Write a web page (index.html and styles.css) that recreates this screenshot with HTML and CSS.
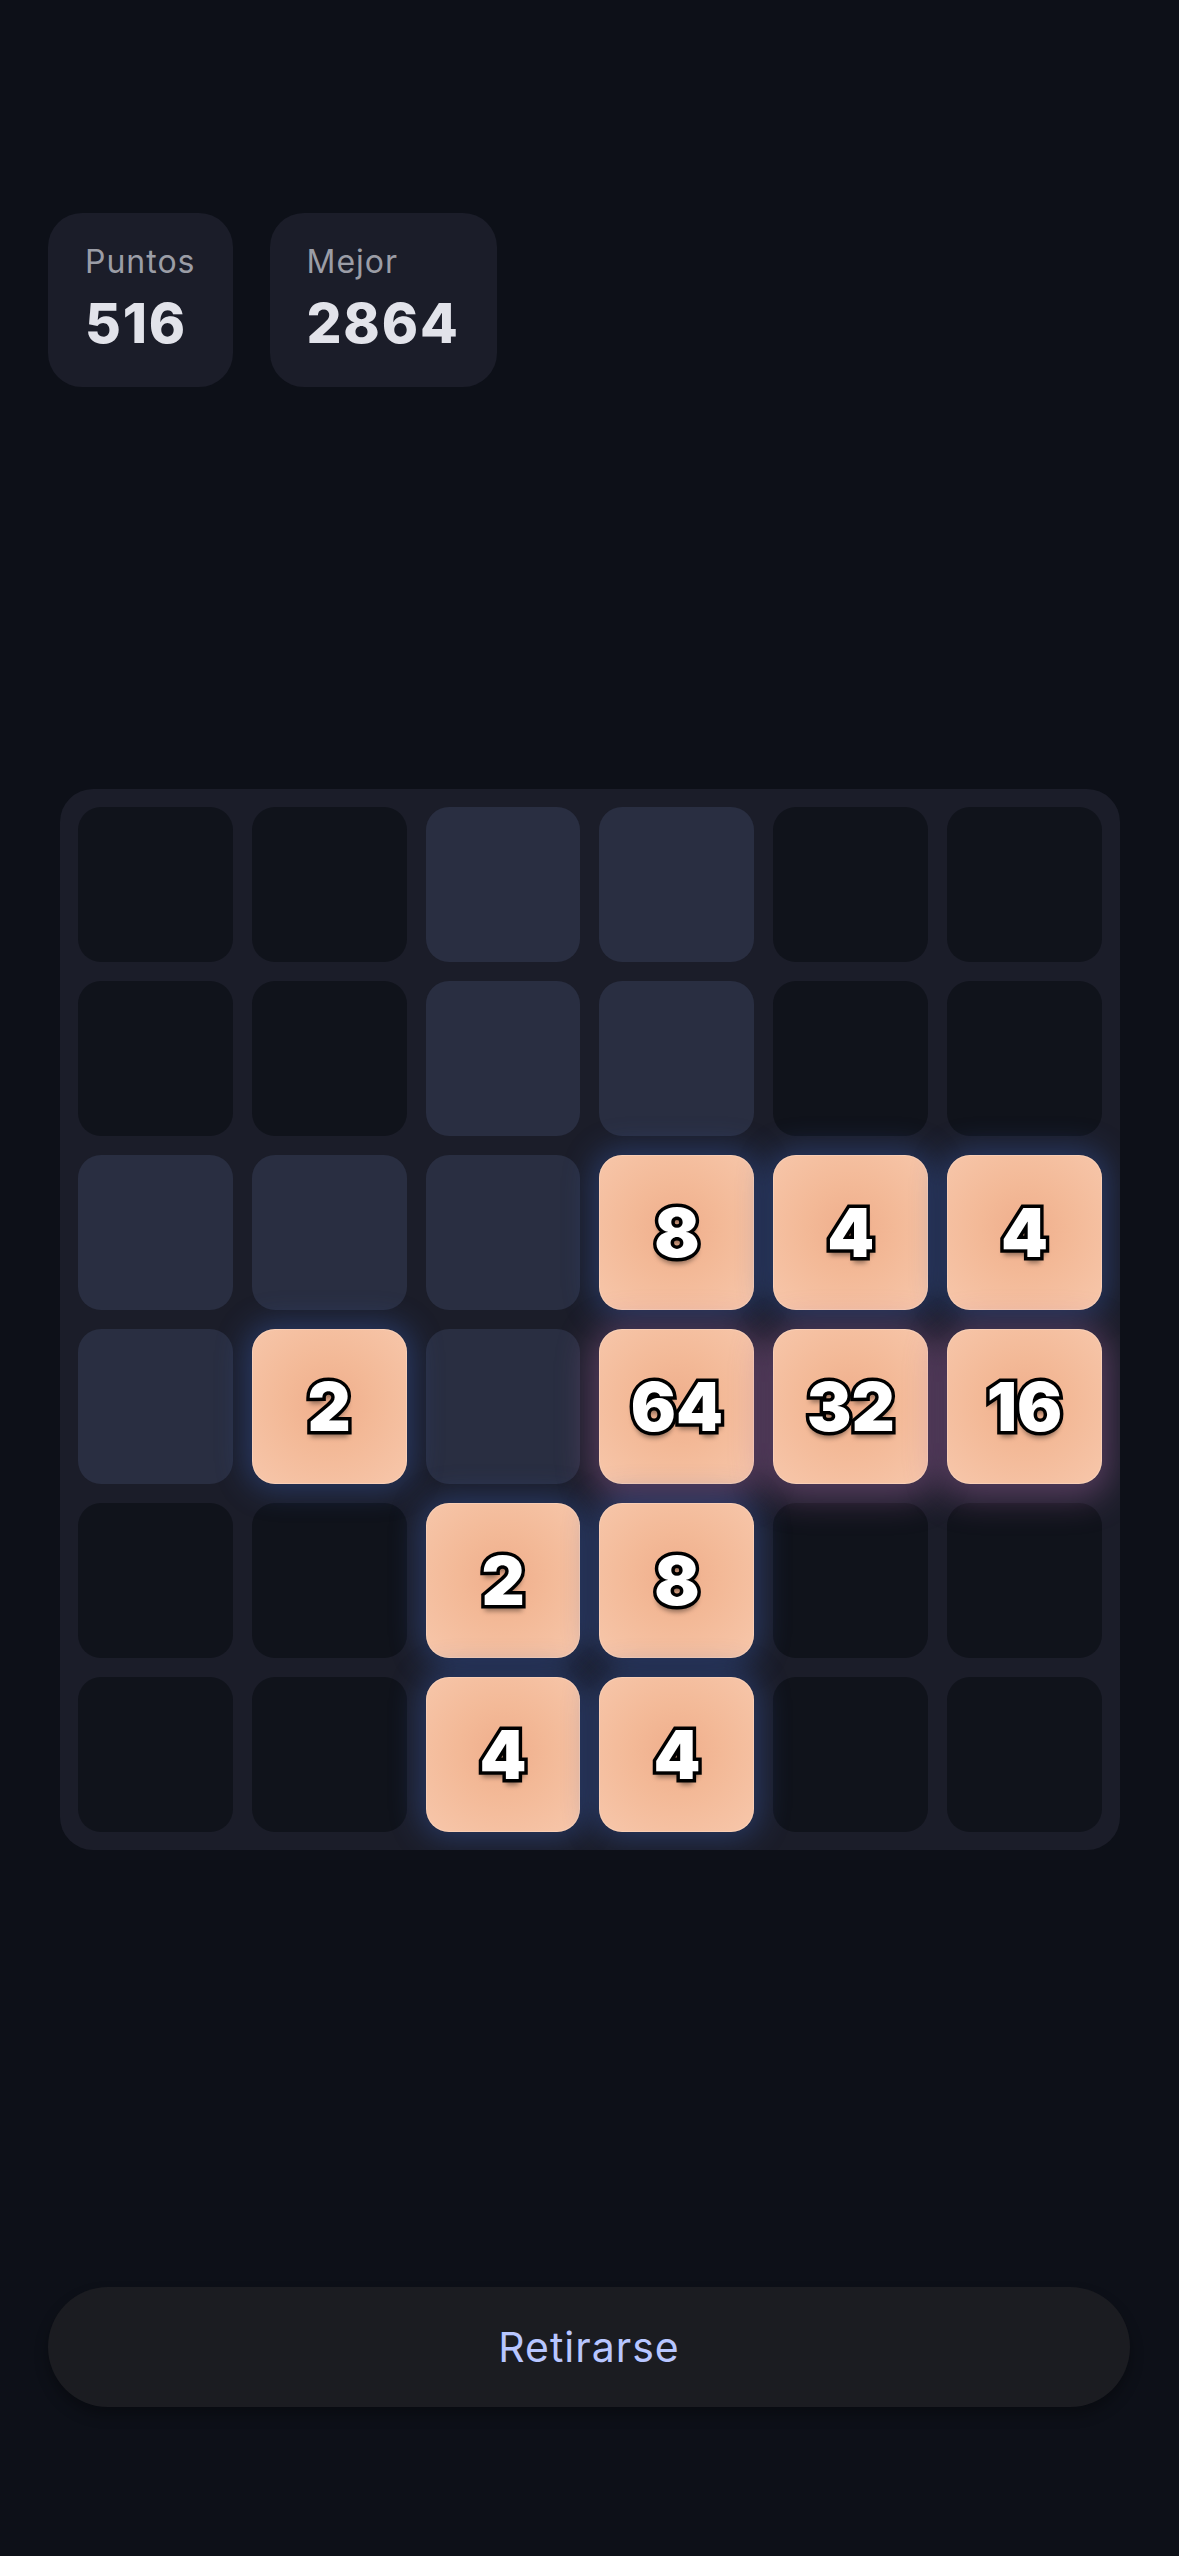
FILE: index.html
```html
<!DOCTYPE html>
<html>
<head>
  <title>2048</title>
  <link rel="stylesheet" href="styles.css">
</head>
<body>
  <div class="page">
    <div class="scores">
      <div class="score">
        <div class="score-label">Puntos</div>
        <div class="score-value">516</div>
      </div>
      <div class="score">
        <div class="score-label">Mejor</div>
        <div class="score-value">2864</div>
      </div>
    </div>

    <div class="board">
      <div class="cell"></div>
      <div class="cell"></div>
      <div class="cell lit"></div>
      <div class="cell lit"></div>
      <div class="cell"></div>
      <div class="cell"></div>

      <div class="cell"></div>
      <div class="cell"></div>
      <div class="cell lit"></div>
      <div class="cell lit"></div>
      <div class="cell"></div>
      <div class="cell"></div>

      <div class="cell lit"></div>
      <div class="cell lit"></div>
      <div class="cell lit"></div>
      <div class="cell tile"><span>8</span></div>
      <div class="cell tile"><span>4</span></div>
      <div class="cell tile"><span>4</span></div>

      <div class="cell lit"></div>
      <div class="cell tile"><span>2</span></div>
      <div class="cell lit"></div>
      <div class="cell tile hot"><span>64</span></div>
      <div class="cell tile hot"><span>32</span></div>
      <div class="cell tile hot"><span>16</span></div>

      <div class="cell"></div>
      <div class="cell"></div>
      <div class="cell tile"><span>2</span></div>
      <div class="cell tile"><span>8</span></div>
      <div class="cell"></div>
      <div class="cell"></div>

      <div class="cell"></div>
      <div class="cell"></div>
      <div class="cell tile"><span>4</span></div>
      <div class="cell tile"><span>4</span></div>
      <div class="cell"></div>
      <div class="cell"></div>
    </div>

    <button class="quit-button">Retirarse</button>
  </div>
</body>
</html>
```

FILE: styles.css
```css
body {
  margin: 0;
  background-color: #0d1018;
  font-family: Inter, "Noto Sans", sans-serif;
}

.page {
  min-height: 2556px;
  padding: 213px 48px 0 48px;
  box-sizing: border-box;
  display: flex;
  flex-direction: column;
}

.scores {
  display: flex;
  gap: 37px;
}

.score {
  background-color: #1b1d29;
  border-radius: 34px;
  padding: 30px 37px 31px 37px;
  display: flex;
  flex-direction: column;
  gap: 9px;
}

.score-label {
  font-size: 32px;
  line-height: 38px;
  color: #9b9da6;
  letter-spacing: 1px;
}

.score-value {
  font-size: 55px;
  line-height: 66px;
  font-weight: 800;
  color: #e2e3ea;
  letter-spacing: 1.8px;
}

/* Board */
.board {
  width: 1060px;
  box-sizing: border-box;
  margin: 402px 0 0 12px;
  padding: 18px;
  background-color: #1b1d29;
  border-radius: 33px;
  overflow: hidden;
  display: grid;
  grid-template-columns: repeat(6, 1fr);
  gap: 19px;
}

.cell {
  height: 155px;
  border-radius: 23px;
  background-color: #10131b;
  display: flex;
  align-items: center;
  justify-content: center;
}

.cell.lit {
  background-color: #292e41;
}

.tile {
  background: radial-gradient(circle at 50% 48%, #efae8c 0%, #f3b997 40%, #f7c7ab 100%);
  box-shadow: 0 0 30px 6px rgba(58, 92, 170, 0.45), inset 0 0 0 1px rgba(255, 230, 215, 0.35);
  position: relative;
  z-index: 1;
}

.tile.hot {
  box-shadow: 0 6px 34px 8px rgba(160, 100, 160, 0.45), inset 0 0 0 1px rgba(255, 230, 215, 0.35);
}

.tile span {
  font-size: 67px;
  font-weight: 900;
  color: #ffffff;
  -webkit-text-stroke: 7px #000000;
  paint-order: stroke fill;
  text-shadow: 0 6px 5px rgba(0, 0, 0, 0.4);
  line-height: 1;
}

/* Bottom action */
.quit-button {
  margin-top: 437px;
  height: 120px;
  width: 1082px;
  border: none;
  border-radius: 60px;
  background-color: #1b1c21;
  color: #b8c6ff;
  font-family: Inter, "Noto Sans", sans-serif;
  font-size: 41px;
  letter-spacing: 1px;
  box-shadow: 0 8px 14px rgba(0, 0, 0, 0.3);
  cursor: pointer;
}
```
